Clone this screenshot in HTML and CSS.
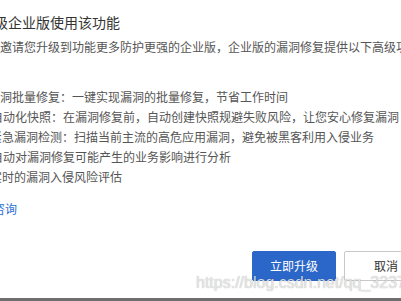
FILE: index.html
```html
<!DOCTYPE html>
<html lang="zh-CN">
<head>
<meta charset="utf-8">
<title>升级企业版</title>
<link rel="stylesheet" href="styles.css">
</head>
<body>
<div class="page">
  <div class="dialog">
    <h2 class="title">升级企业版使用该功能</h2>
    <p class="intro">邀请您升级到功能更多防护更强的企业版，企业版的漏洞修复提供以下高级功能：</p>
    <ul class="features">
      <li class="first">漏洞批量修复：一键实现漏洞的批量修复，节省工作时间</li>
      <li>自动化快照：在漏洞修复前，自动创建快照规避失败风险，让您安心修复漏洞</li>
      <li class="shift">紧急漏洞检测：扫描当前主流的高危应用漏洞，避免被黑客利用入侵业务</li>
      <li>自动对漏洞修复可能产生的业务影响进行分析</li>
      <li class="shift">实时的漏洞入侵风险评估</li>
    </ul>
    <a class="consult" href="#">立即咨询</a>
    <div class="footer">
      <button class="btn primary">立即升级</button>
      <button class="btn">取消</button>
    </div>
  </div>
  <div class="taskbar"></div>
  <div class="watermark">https://blog.csdn.net/qq_32373350</div>
</div>
</body>
</html>
```

FILE: styles.css
```css
html, body {
  margin: 0;
  padding: 0;
  background: #ffffff;
}

.page {
  position: relative;
  width: 401px;
  height: 301px;
  overflow: hidden;
  display: flex;
  flex-direction: column;
  font-family: "Noto Sans CJK SC", "Noto Sans", sans-serif;
  color: #555555;
}

.dialog {
  flex: 1;
  box-sizing: border-box;
  width: 512px;
  min-width: 512px;
  margin-left: -60px;
  padding: 12px 24px 0 20px;
  display: flex;
  flex-direction: column;
  align-items: flex-start;
}

.title {
  margin: 0 0 4px 20px;
  font-size: 14px;
  line-height: 20px;
  font-weight: normal;
  color: #333333;
  white-space: nowrap;
}

.intro {
  margin: 0 0 30px 40px;
  font-size: 12px;
  line-height: 21px;
  color: #555555;
  white-space: nowrap;
}

.features {
  list-style: none;
  margin: 0 0 12px 31px;
  padding: 0;
  font-size: 12px;
  line-height: 20px;
  color: #555555;
}

.features li {
  white-space: nowrap;
}

.features li.first {
  margin-left: -3px;
}

.features li.shift {
  margin-left: -1px;
}

.consult {
  margin-left: 9px;
  font-size: 12px;
  line-height: 20px;
  color: #2b6fd3;
  text-decoration: none;
  white-space: nowrap;
}

.footer {
  align-self: stretch;
  margin-top: 32px;
  display: flex;
  justify-content: flex-end;
  gap: 8px;
}

.btn {
  box-sizing: border-box;
  width: 84px;
  height: 30px;
  padding: 0;
  border: 1px solid #c9c9c9;
  border-radius: 2px;
  background: #ffffff;
  color: #333333;
  font-family: "Noto Sans CJK SC", "Noto Sans", sans-serif;
  font-size: 12px;
  line-height: 28px;
}

.btn.primary {
  border-color: #2b67c8;
  background: #2b67c8;
  color: #ffffff;
}

.taskbar {
  height: 3px;
  background: #6e6e6e;
}

.watermark {
  position: absolute;
  left: 196px;
  top: 274px;
  font-family: "Liberation Sans", Arial, sans-serif;
  font-size: 16px;
  line-height: 18px;
  color: rgba(240, 240, 240, 0.85);
  text-shadow: 0 0 1px rgba(0, 0, 0, 0.35);
  white-space: nowrap;
  pointer-events: none;
}
```
